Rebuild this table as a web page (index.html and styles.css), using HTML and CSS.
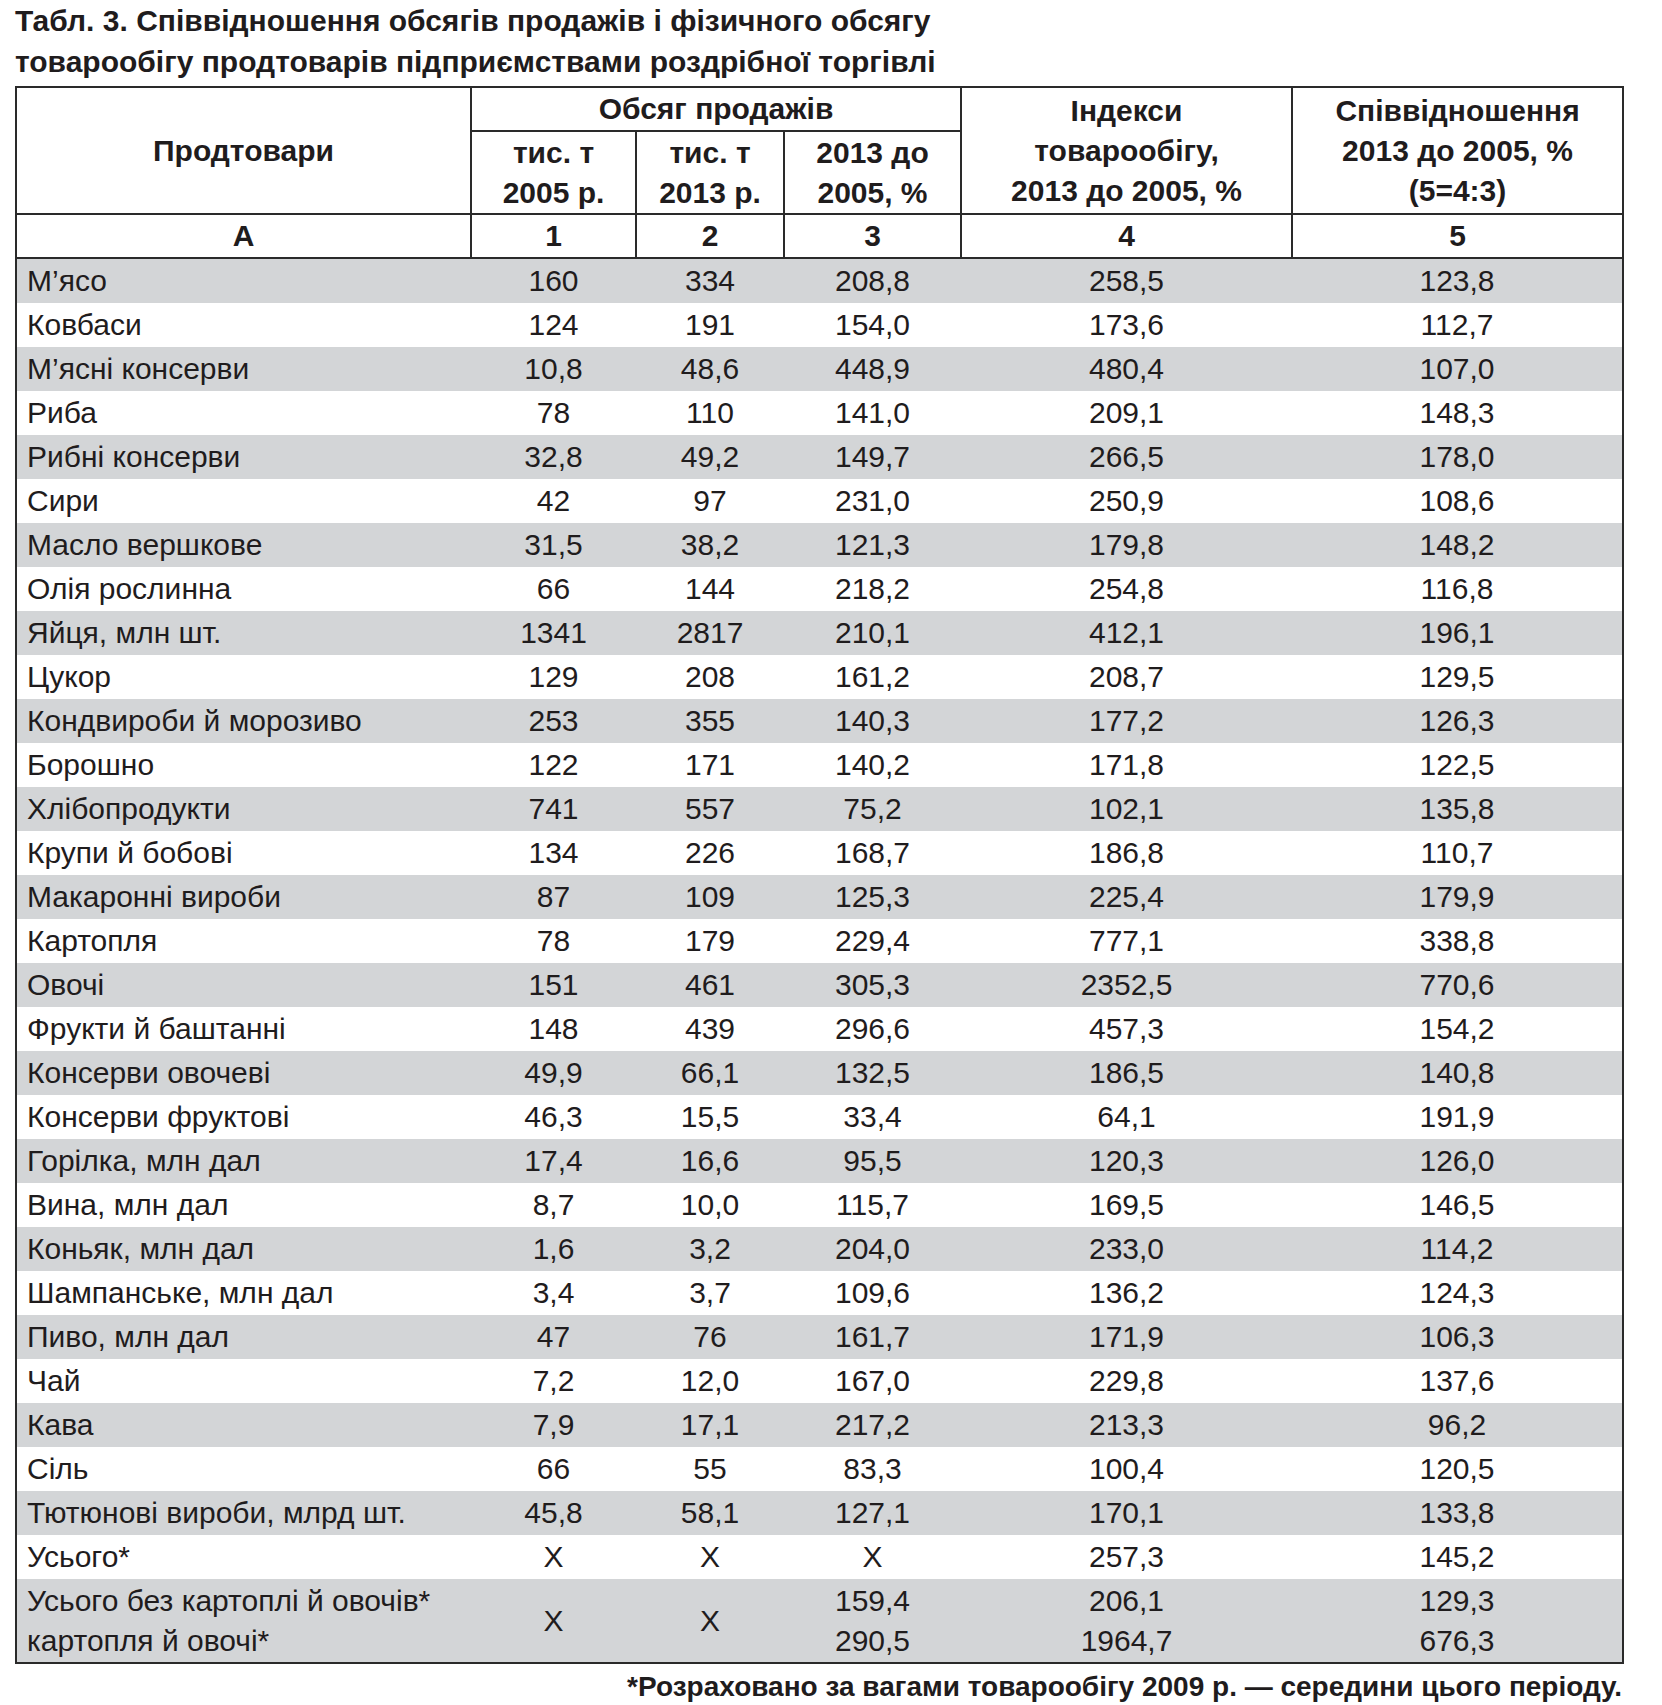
FILE: index.html
```html
<!DOCTYPE html>
<html lang="uk">
<head>
<meta charset="utf-8">
<title>Табл. 3</title>
<link rel="stylesheet" href="styles.css">
</head>
<body>
<div class="page">
<h1 class="title">Табл. 3. Співвідношення обсягів продажів і фізичного обсягу<br>товарообігу продтоварів підприємствами роздрібної торгівлі</h1>
<table class="tbl">
<colgroup>
<col class="c-a"><col class="c-1"><col class="c-2"><col class="c-3"><col class="c-4"><col class="c-5">
</colgroup>
<thead>
<tr class="h1">
<th rowspan="2">Продтовари</th>
<th colspan="3">Обсяг продажів</th>
<th rowspan="2">Індекси<br>товарообігу,<br>2013 до 2005, %</th>
<th rowspan="2">Співвідношення<br>2013 до 2005, %<br>(5=4:3)</th>
</tr>
<tr class="h2">
<th>тис. т<br>2005 р.</th>
<th>тис. т<br>2013 р.</th>
<th>2013 до<br>2005, %</th>
</tr>
<tr class="h3">
<th>А</th><th>1</th><th>2</th><th>3</th><th>4</th><th>5</th>
</tr>
</thead>
<tbody>
<tr class="g"><td>М’ясо</td><td>160</td><td>334</td><td>208,8</td><td>258,5</td><td>123,8</td></tr>
<tr><td>Ковбаси</td><td>124</td><td>191</td><td>154,0</td><td>173,6</td><td>112,7</td></tr>
<tr class="g"><td>М’ясні консерви</td><td>10,8</td><td>48,6</td><td>448,9</td><td>480,4</td><td>107,0</td></tr>
<tr><td>Риба</td><td>78</td><td>110</td><td>141,0</td><td>209,1</td><td>148,3</td></tr>
<tr class="g"><td>Рибні консерви</td><td>32,8</td><td>49,2</td><td>149,7</td><td>266,5</td><td>178,0</td></tr>
<tr><td>Сири</td><td>42</td><td>97</td><td>231,0</td><td>250,9</td><td>108,6</td></tr>
<tr class="g"><td>Масло вершкове</td><td>31,5</td><td>38,2</td><td>121,3</td><td>179,8</td><td>148,2</td></tr>
<tr><td>Олія рослинна</td><td>66</td><td>144</td><td>218,2</td><td>254,8</td><td>116,8</td></tr>
<tr class="g"><td>Яйця, млн шт.</td><td>1341</td><td>2817</td><td>210,1</td><td>412,1</td><td>196,1</td></tr>
<tr><td>Цукор</td><td>129</td><td>208</td><td>161,2</td><td>208,7</td><td>129,5</td></tr>
<tr class="g"><td>Кондвироби й морозиво</td><td>253</td><td>355</td><td>140,3</td><td>177,2</td><td>126,3</td></tr>
<tr><td>Борошно</td><td>122</td><td>171</td><td>140,2</td><td>171,8</td><td>122,5</td></tr>
<tr class="g"><td>Хлібопродукти</td><td>741</td><td>557</td><td>75,2</td><td>102,1</td><td>135,8</td></tr>
<tr><td>Крупи й бобові</td><td>134</td><td>226</td><td>168,7</td><td>186,8</td><td>110,7</td></tr>
<tr class="g"><td>Макаронні вироби</td><td>87</td><td>109</td><td>125,3</td><td>225,4</td><td>179,9</td></tr>
<tr><td>Картопля</td><td>78</td><td>179</td><td>229,4</td><td>777,1</td><td>338,8</td></tr>
<tr class="g"><td>Овочі</td><td>151</td><td>461</td><td>305,3</td><td>2352,5</td><td>770,6</td></tr>
<tr><td>Фрукти й баштанні</td><td>148</td><td>439</td><td>296,6</td><td>457,3</td><td>154,2</td></tr>
<tr class="g"><td>Консерви овочеві</td><td>49,9</td><td>66,1</td><td>132,5</td><td>186,5</td><td>140,8</td></tr>
<tr><td>Консерви фруктові</td><td>46,3</td><td>15,5</td><td>33,4</td><td>64,1</td><td>191,9</td></tr>
<tr class="g"><td>Горілка, млн дал</td><td>17,4</td><td>16,6</td><td>95,5</td><td>120,3</td><td>126,0</td></tr>
<tr><td>Вина, млн дал</td><td>8,7</td><td>10,0</td><td>115,7</td><td>169,5</td><td>146,5</td></tr>
<tr class="g"><td>Коньяк, млн дал</td><td>1,6</td><td>3,2</td><td>204,0</td><td>233,0</td><td>114,2</td></tr>
<tr><td>Шампанське, млн дал</td><td>3,4</td><td>3,7</td><td>109,6</td><td>136,2</td><td>124,3</td></tr>
<tr class="g"><td>Пиво, млн дал</td><td>47</td><td>76</td><td>161,7</td><td>171,9</td><td>106,3</td></tr>
<tr><td>Чай</td><td>7,2</td><td>12,0</td><td>167,0</td><td>229,8</td><td>137,6</td></tr>
<tr class="g"><td>Кава</td><td>7,9</td><td>17,1</td><td>217,2</td><td>213,3</td><td>96,2</td></tr>
<tr><td>Сіль</td><td>66</td><td>55</td><td>83,3</td><td>100,4</td><td>120,5</td></tr>
<tr class="g"><td>Тютюнові вироби, млрд шт.</td><td>45,8</td><td>58,1</td><td>127,1</td><td>170,1</td><td>133,8</td></tr>
<tr><td>Усього*</td><td>Х</td><td>Х</td><td>Х</td><td>257,3</td><td>145,2</td></tr>
<tr class="g dbl"><td>Усього без картоплі й овочів*<br>картопля й овочі*</td><td>Х</td><td>Х</td><td>159,4<br>290,5</td><td>206,1<br>1964,7</td><td>129,3<br>676,3</td></tr>
</tbody>
</table>
<p class="note">*Розраховано за вагами товарообігу 2009 р. — середини цього періоду.</p>
</div>
</body>
</html>
```

FILE: styles.css
```css
html, body {
  margin: 0;
  padding: 0;
  background: #ffffff;
}
body {
  font-family: "Liberation Sans", Arial, sans-serif;
  color: #1f1c1d;
}
.page {
  padding: 0 0 0 15px;
  width: 1607px;
}
.title {
  margin: 0;
  padding-top: 0;
  font-size: 30px;
  line-height: 41px;
  font-weight: bold;
  height: 86px;
}
.tbl {
  border-collapse: collapse;
  table-layout: fixed;
  width: 1607px;
  border: 2px solid #2a2a2a;
}
.c-a { width: 455px; }
.c-1 { width: 165px; }
.c-2 { width: 148px; }
.c-3 { width: 177px; }
.c-4 { width: 331px; }
.c-5 { width: 331px; }
.tbl th {
  border: 2px solid #2a2a2a;
  font-weight: bold;
  font-size: 30px;
  line-height: 40px;
  padding: 0;
  text-align: center;
  vertical-align: middle;
}
.tbl .h1 th { height: 42px; }
.tbl .h2 th { height: 81px; }
.tbl .h3 th { height: 42px; }
.tbl td {
  font-size: 30px;
  line-height: 40px;
  height: 44px;
  padding: 0;
  text-align: center;
  vertical-align: middle;
}
.tbl td:first-child {
  text-align: left;
  padding-left: 10px;
}
.tbl tr.g td {
  background: #d3d5d7;
}
.tbl tr.dbl td {
  height: 83px;
  line-height: 40px;
}
.note {
  margin: 5px 0 0 0;
  text-align: right;
  font-weight: bold;
  font-size: 28px;
  line-height: 36px;
}
```
